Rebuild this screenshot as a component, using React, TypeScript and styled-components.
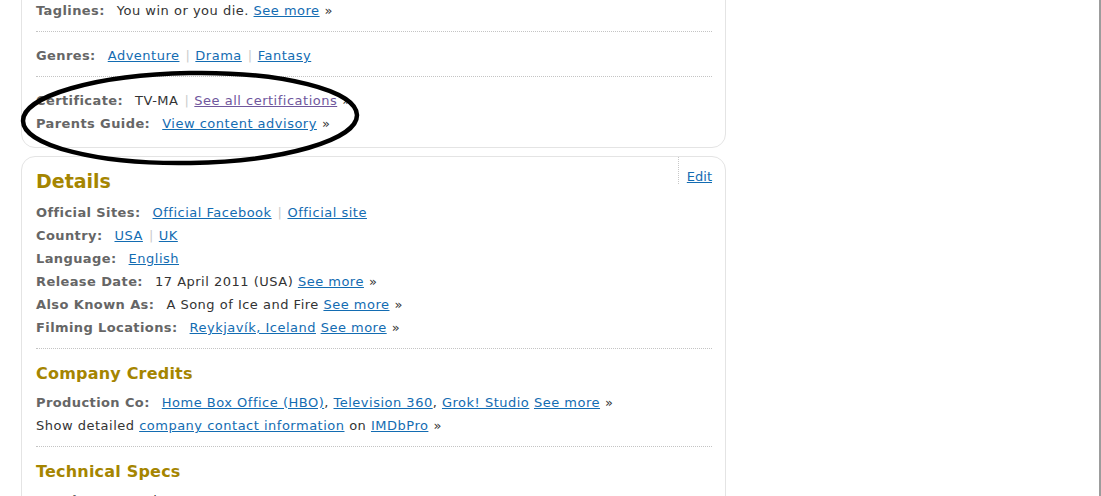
import React from "react";
import styled, { createGlobalStyle } from "styled-components";

const Global = createGlobalStyle`
  html, body { margin: 0; padding: 0; background: #fff; }
  body { font-family: Verdana, "DejaVu Sans", sans-serif; font-size: 13px; color: #333; letter-spacing: 0.5px; }
`;

const Page = styled.div`
  position: relative;
  width: 1099px;
  height: 496px;
  overflow: hidden;
  border-right: 2px solid #9c9c9c;
`;

const Column = styled.div`
  width: 705px;
  margin-left: 21px;
  margin-top: -14px;
  display: flex;
  flex-direction: column;
  gap: 8px;
`;

const Card = styled.section`
  border: 1px solid #e4e4e4;
  border-radius: 14px;
  background: #fff;
  padding: 0 13px 12px 14px;
`;

const Spacer = styled.div`
  height: 12px;
`;

const Row = styled.div`
  line-height: 23px;
  white-space: nowrap;
`;

const Label = styled.span`
  font-weight: bold;
  color: #666;
  letter-spacing: 0.4px;
  margin-right: 12px;
`;

const Link = styled.a<{ $visited?: boolean }>`
  color: ${(p) => (p.$visited ? "#70579d" : "#136cb2")};
  text-decoration: underline;
  cursor: pointer;
`;

const Sep = styled.span`
  color: #ccc;
  margin: 0 5px 0 6px;
`;

const Raquo = styled.span`
  color: #333;
  margin-left: 5px;
`;

const Divider = styled.hr`
  border: 0;
  border-top: 1px dotted #c4c4c4;
  height: 0;
  margin: 9px 0 12px;
`;

const HeaderRow = styled.div`
  display: flex;
  justify-content: space-between;
  align-items: flex-start;
`;

const Title = styled.h2`
  margin: 0;
  padding-top: 12px;
  font-size: 19px;
  line-height: 25px;
  font-weight: bold;
  letter-spacing: 0;
  color: #a58500;
`;

const EditBox = styled.div`
  border-left: 1px dotted #c8c8c8;
  padding: 11px 0 0 8px;
  height: 16px;
  line-height: 17px;
  letter-spacing: 0;
`;

const SubTitle = styled.h3`
  margin: 14px 0 6px;
  font-size: 16px;
  line-height: 22px;
  font-weight: bold;
  letter-spacing: 0.2px;
  color: #a58500;
`;

const DetailsBody = styled.div`
  margin-top: 7px;
`;

const Annotation = styled.svg`
  position: absolute;
  left: 0;
  top: 0;
  pointer-events: none;
`;

export default function App() {
  return (
    <>
      <Global />
      <Page>
        <Column>
          <Card>
            <Spacer />
            <Row>
              <Label>Taglines:</Label>You win or you die. <Link>See more</Link>
              <Raquo>»</Raquo>
            </Row>
            <Divider />
            <Row>
              <Label>Genres:</Label>
              <Link>Adventure</Link>
              <Sep>|</Sep>
              <Link>Drama</Link>
              <Sep>|</Sep>
              <Link>Fantasy</Link>
            </Row>
            <Divider />
            <Row>
              <Label>Certificate:</Label>TV-MA<Sep>|</Sep>
              <Link $visited>See all certifications</Link>
              <Raquo>»</Raquo>
            </Row>
            <Row>
              <Label>Parents Guide:</Label>
              <Link>View content advisory</Link>
              <Raquo>»</Raquo>
            </Row>
          </Card>
          <Card>
            <HeaderRow>
              <Title>Details</Title>
              <EditBox>
                <Link>Edit</Link>
              </EditBox>
            </HeaderRow>
            <DetailsBody>
              <Row>
                <Label>Official Sites:</Label>
                <Link>Official Facebook</Link>
                <Sep>|</Sep>
                <Link>Official site</Link>
              </Row>
              <Row>
                <Label>Country:</Label>
                <Link>USA</Link>
                <Sep>|</Sep>
                <Link>UK</Link>
              </Row>
              <Row>
                <Label>Language:</Label>
                <Link>English</Link>
              </Row>
              <Row>
                <Label>Release Date:</Label>17 April 2011 (USA) <Link>See more</Link>
                <Raquo>»</Raquo>
              </Row>
              <Row>
                <Label>Also Known As:</Label>A Song of Ice and Fire <Link>See more</Link>
                <Raquo>»</Raquo>
              </Row>
              <Row>
                <Label>Filming Locations:</Label>
                <Link>Reykjavík, Iceland</Link> <Link>See more</Link>
                <Raquo>»</Raquo>
              </Row>
            </DetailsBody>
            <Divider />
            <SubTitle>Company Credits</SubTitle>
            <Row>
              <Label>Production Co:</Label>
              <Link>Home Box Office (HBO)</Link>, <Link>Television 360</Link>,{" "}
              <Link>Grok! Studio</Link> <Link>See more</Link>
              <Raquo>»</Raquo>
            </Row>
            <Row>
              Show detailed <Link>company contact information</Link> on <Link>IMDbPro</Link>
              <Raquo>»</Raquo>
            </Row>
            <Divider />
            <SubTitle>Technical Specs</SubTitle>
            <Row>
              <Label>Runtime:</Label>60 min
            </Row>
          </Card>
        </Column>
        <Annotation width="400" height="180" viewBox="0 0 400 180">
          <ellipse
            cx="190"
            cy="118"
            rx="167"
            ry="45"
            fill="none"
            stroke="#000"
            strokeWidth="4.5"
            transform="rotate(-1 190 118)"
          />
        </Annotation>
      </Page>
    </>
  );
}
